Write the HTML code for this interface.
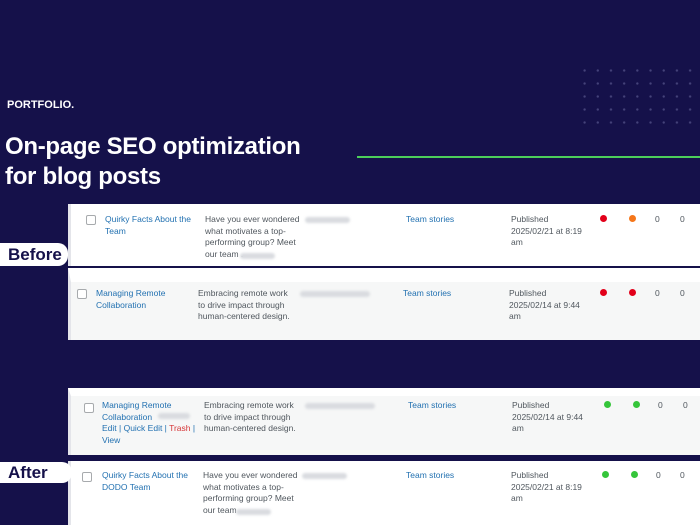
<!DOCTYPE html>
<html><head><meta charset="utf-8"><style>
*{margin:0;padding:0;box-sizing:border-box}
body{width:700px;height:525px;overflow:hidden;background:#15114a;position:relative;font-family:"Liberation Sans",sans-serif}
.abs{position:absolute}
.dots{position:absolute;left:578px;top:64px;width:122px;height:70px;background-image:radial-gradient(circle,#45437a 0.9px,transparent 1.4px);background-size:13.2px 13px}
.panel{position:absolute;left:68px;width:632px;border-left:3px solid #e4e5ea}
.t{position:absolute;font-size:8.5px;line-height:11.5px;color:#50575e}
.l{color:#2271b1}
.cb{position:absolute;width:10px;height:10px;border:1px solid #a7aaad;border-radius:2px;background:#fff}
.d{position:absolute;width:7px;height:7px;border-radius:50%}
.blur{position:absolute;height:6px;border-radius:3px;background:#d9dbe0;filter:blur(1.2px)}
.lab{position:absolute;left:0;width:68px;background:#fff;border-radius:0 10px 10px 0;font-weight:bold;color:#15114a;font-size:17px;padding-left:8px}
</style></head><body>
<div class="dots"></div>
<div class="abs" style="left:357px;top:156px;width:343px;height:2px;background:#4ccf5a"></div>
<div class="abs" style="left:7px;top:99px;color:#fff;font-weight:bold;font-size:11px">PORTFOLIO.</div>
<div class="abs" style="left:5px;top:132px;color:#fff;font-weight:bold;font-size:24px;line-height:30px;letter-spacing:-0.3px">On-page SEO optimization<br>for blog posts</div>

<!-- panel 1 -->
<div class="panel" style="top:204px;height:62px;background:#fff"></div>
<div class="cb" style="left:86px;top:215px"></div>
<div class="t l" style="left:105px;top:214px">Quirky Facts About the<br>Team</div>
<div class="t" style="left:205px;top:214px">Have you ever wondered<br>what motivates a top-<br>performing group? Meet<br>our team .</div>
<div class="blur" style="left:240px;top:253px;width:35px"></div>
<div class="blur" style="left:305px;top:217px;width:45px"></div>
<div class="t l" style="left:406px;top:214px">Team stories</div>
<div class="t" style="left:511px;top:214px">Published<br>2025/02/21 at 8:19<br>am</div>
<div class="d" style="left:600px;top:215px;background:#e2001a"></div>
<div class="d" style="left:629px;top:215px;background:#f5761a"></div>
<div class="t" style="left:655px;top:214px">0</div>
<div class="t" style="left:680px;top:214px">0</div>
<div class="lab" style="top:243px;height:23px;line-height:23px">Before</div>

<!-- panel 2 -->
<div class="panel" style="top:268px;height:72px;background:#f6f7f7;border-top:14px solid #fff"></div>
<div class="cb" style="left:77px;top:289px"></div>
<div class="t l" style="left:96px;top:288px">Managing Remote<br>Collaboration</div>
<div class="t" style="left:198px;top:288px">Embracing remote work<br>to drive impact through<br>human-centered design.</div>
<div class="blur" style="left:300px;top:291px;width:70px"></div>
<div class="t l" style="left:403px;top:288px">Team stories</div>
<div class="t" style="left:509px;top:288px">Published<br>2025/02/14 at 9:44<br>am</div>
<div class="d" style="left:600px;top:289px;background:#e2001a"></div>
<div class="d" style="left:629px;top:289px;background:#e2001a"></div>
<div class="t" style="left:655px;top:288px">0</div>
<div class="t" style="left:680px;top:288px">0</div>

<!-- panel 3 -->
<div class="panel" style="top:388px;height:67px;background:#f6f7f7;border-top:8px solid #fff"></div>
<div class="cb" style="left:84px;top:403px"></div>
<div class="t l" style="left:102px;top:400px">Managing Remote<br>Collaboration<br>Edit | Quick Edit | <span style="color:#d63638">Trash</span> |<br>View</div>
<div class="blur" style="left:158px;top:413px;width:32px"></div>
<div class="t" style="left:204px;top:400px">Embracing remote work<br>to drive impact through<br>human-centered design.</div>
<div class="blur" style="left:305px;top:403px;width:70px"></div>
<div class="t l" style="left:408px;top:400px">Team stories</div>
<div class="t" style="left:512px;top:400px">Published<br>2025/02/14 at 9:44<br>am</div>
<div class="d" style="left:604px;top:401px;background:#35c53a"></div>
<div class="d" style="left:633px;top:401px;background:#35c53a"></div>
<div class="t" style="left:658px;top:400px">0</div>
<div class="t" style="left:683px;top:400px">0</div>

<!-- panel 4 -->
<div class="panel" style="top:461px;height:64px;background:#fff"></div>
<div class="cb" style="left:82px;top:472px"></div>
<div class="t l" style="left:102px;top:470px">Quirky Facts About the<br>DODO Team</div>
<div class="t" style="left:203px;top:470px">Have you ever wondered<br>what motivates a top-<br>performing group? Meet<br>our team</div>
<div class="blur" style="left:236px;top:509px;width:35px"></div>
<div class="blur" style="left:302px;top:473px;width:45px"></div>
<div class="t l" style="left:406px;top:470px">Team stories</div>
<div class="t" style="left:511px;top:470px">Published<br>2025/02/21 at 8:19<br>am</div>
<div class="d" style="left:602px;top:471px;background:#35c53a"></div>
<div class="d" style="left:631px;top:471px;background:#35c53a"></div>
<div class="t" style="left:656px;top:470px">0</div>
<div class="t" style="left:680px;top:470px">0</div>
<div class="lab" style="top:462px;height:21px;line-height:21px;width:72px">After</div>
</body></html>
